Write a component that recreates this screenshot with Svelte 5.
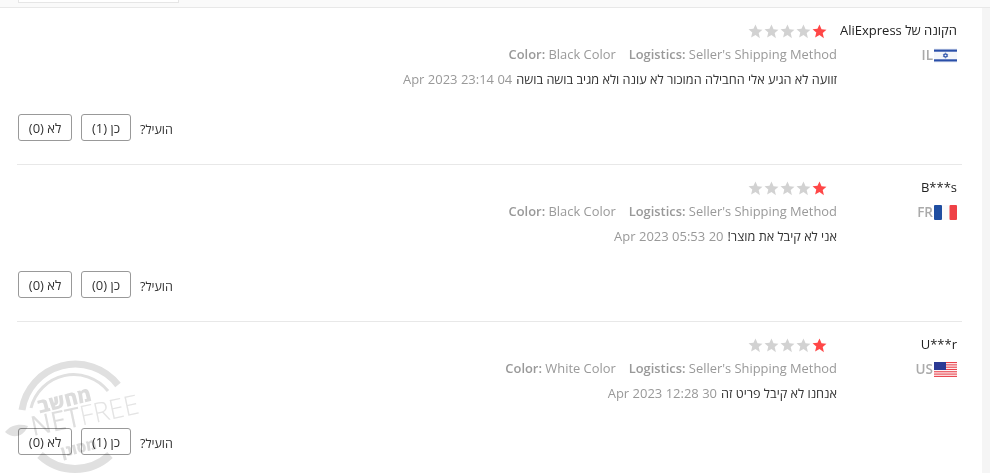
<script>
  const reviews = [
    { name: 'הקונה של AliExpress', cc: 'IL', flag: 'il', color: 'Black Color', text: 'זוועה לא הגיע אלי החבילה המוכור לא עונה ולא מגיב בושה בושה', date: '04 Apr 2023 23:14', yes: 1, no: 0 },
    { name: 'B***s', cc: 'FR', flag: 'fr', color: 'Black Color', text: 'אני לא קיבל את מוצר!', date: '20 Apr 2023 05:53', yes: 0, no: 0 },
    { name: 'U***r', cc: 'US', flag: 'us', color: 'White Color', text: 'אנחנו לא קיבל פריט זה', date: '30 Apr 2023 12:28', yes: 1, no: 0 }
  ];
  const stars = [0, 1, 2, 3, 4];
  const stripes = [0, 1, 2, 3, 4, 5, 6];
</script>

<div class="page" dir="rtl">
  <div class="topbar"><div class="topbox"></div></div>
  <div class="list">
    {#each reviews as r}
      <article class="item">
        <div class="who">
          <div class="name">{r.name}</div>
          <div class="country">
            <svg class="flag" viewBox="0 0 23 15" aria-hidden="true">
              {#if r.flag === 'il'}
                <rect width="23" height="15" fill="#f4f6fa" />
                <rect y="1.5" width="23" height="2.2" fill="#2a4fa8" />
                <rect y="11.3" width="23" height="2.2" fill="#2a4fa8" />
                <path d="M11.5 4.8l2.2 3.8h-4.4zM11.5 10.2l-2.2-3.8h4.4z" fill="none" stroke="#2a4fa8" stroke-width=".8" />
              {:else if r.flag === 'fr'}
                <rect width="8" height="15" rx="1" fill="#1f4ea1" />
                <rect x="8" width="7.5" height="15" fill="#fafafa" />
                <rect x="15.5" width="7.5" height="15" rx="1" fill="#ef4146" />
              {:else}
                <rect width="23" height="15" fill="#fff" />
                {#each stripes as s}
                  <rect y={s * 2.3} width="23" height="1.15" fill="#e8424c" />
                {/each}
                <rect width="12" height="8" fill="#2b3a94" />
              {/if}
            </svg>
            <span class="cc">{r.cc}</span>
          </div>
        </div>
        <div class="body">
          <div class="stars">
            {#each stars as s}
              <svg class="star" viewBox="0 0 14 14" aria-hidden="true">
                <path d="M7 .5l1.9 4.4 4.6.4-3.5 3.1 1.1 4.8L7 10.2l-4.1 2.5L4 7.9.5 4.8l4.6-.4z" fill={s === 0 ? '#ff4747' : '#d2d2d2'} />
              </svg>
            {/each}
          </div>
          <div class="meta" dir="ltr">
            <span><b>Color:</b> {r.color}</span>
            <span><b>Logistics:</b> Seller's Shipping Method</span>
          </div>
          <div class="content">
            <span class="text">{r.text}</span>
            <span class="date">{r.date}</span>
          </div>
        </div>
        <div class="helpful">
          <span class="label">הועיל?</span>
          <button class="yes">כן ({r.yes})</button>
          <button class="no">לא ({r.no})</button>
        </div>
      </article>
    {/each}
  </div>
  <svg class="mark" viewBox="0 0 150 123" aria-hidden="true">
    <g fill="none" stroke="#e0e0e0">
      <path d="M22 60A54 54 0 0 1 118 35" stroke-width="7" />
      <path d="M31 58A44 44 0 0 1 108 41" stroke-width="3" />
      <path d="M40 105A51 51 0 0 0 110 105" stroke-width="8" />
    </g>
    <path d="M5 82C10 75 20 73 28 76C24 86 14 90 5 82Z" fill="#e0e0e0" />
    <text class="mark-top" x="66" y="57" transform="rotate(-14 66 57)">מחשב</text>
    <text class="mark-main" x="33" y="86" transform="rotate(-12 33 86)"><tspan class="bold">NET</tspan>FREE</text>
    <text class="mark-top small" x="80" y="103" transform="rotate(-14 80 103)">מסונן</text>
  </svg>
</div>

<style>
  :global(body) {
    margin: 0;
    background: #fff;
  }
  .page {
    position: relative;
    width: 990px;
    height: 473px;
    overflow: hidden;
    box-sizing: border-box;
    font-family: "Open Sans", "Noto Sans", sans-serif;
    font-size: 13px;
    color: #333;
    background: linear-gradient(to left, #f5f5f5 8px, #fff 8px);
  }
  .topbar {
    height: 7px;
    background: #fafafa;
    border-bottom: 1px solid #e8e8e8;
    display: flex;
    justify-content: flex-end;
    padding-left: 18px;
  }
  .topbox {
    width: 159px;
    height: 2px;
    background: #fff;
    border: 1px solid #e6e6e6;
    border-top: 0;
  }
  .list {
    display: flex;
    flex-direction: column;
    margin-left: 17px;
    margin-right: 28px;
  }
  .item {
    display: grid;
    grid-template-columns: 120px 1fr;
    grid-template-rows: 92px auto;
    height: 157px;
    box-sizing: border-box;
    padding: 14px 5px 0 0;
    border-bottom: 1px solid #e8e8e8;
  }
  .item:last-child { border-bottom: 0; }
  .name {
    font-size: 13px;
    line-height: 17px;
    color: #222;
    white-space: nowrap;
  }
  .country {
    display: flex;
    align-items: center;
    gap: 1px;
    margin-top: 9px;
  }
  .flag { width: 23px; height: 15px; display: block; }
  .cc { font-size: 13.5px; font-weight: 600; color: #aaa; line-height: 15px; }
  .stars {
    display: flex;
    gap: 1px;
    height: 17px;
    padding-top: 1px;
    margin-bottom: -1px;
    align-items: center;
    padding-right: 10px;
  }
  .star { width: 15px; height: 15px; display: block; }
  .meta {
    display: flex;
    justify-content: flex-end;
    gap: 13px;
    margin-top: 7px;
    font-size: 12.9px;
    line-height: 17px;
    color: #999;
    white-space: nowrap;
  }
  .meta b { font-weight: 600; }
  .content {
    display: flex;
    gap: 4px;
    margin-top: 8px;
    line-height: 17px;
    font-size: 13px;
    white-space: nowrap;
  }
  .text { color: #333; font-size: 12.7px; }
  .date { color: #999; }
  .helpful {
    grid-column: 1 / -1;
    display: flex;
    flex-direction: row;
    justify-content: flex-end;
    align-items: center;
    gap: 9px;
    height: 27px;
    margin-top: 0;
    padding-left: 1px;
  }
  .label { font-size: 12.5px; color: #333; padding-top: 3px; }
  button {
    height: 27px;
    padding: 0;
    background: #fff;
    border: 1px solid #999;
    border-radius: 3px;
    font: inherit;
    font-size: 13px;
    color: #333;
  }
  .yes { width: 50px; }
  .no { width: 54px; }
  .mark {
    position: absolute;
    left: 0;
    top: 350px;
    width: 150px;
    height: 123px;
    pointer-events: none;
    mix-blend-mode: multiply;
  }
  .mark-top {
    font-family: "Open Sans", sans-serif;
    font-size: 20px;
    font-weight: 800;
    fill: #dcdcdc;
    direction: rtl;
    text-anchor: middle;
  }
  .small { font-size: 15px; }
  .mark-main {
    font-family: "Open Sans", sans-serif;
    font-size: 27px;
    font-weight: 300;
    fill: #e4e4e4;
    direction: ltr;
  }
  .bold { font-weight: 400; fill: #dedede; }
</style>
